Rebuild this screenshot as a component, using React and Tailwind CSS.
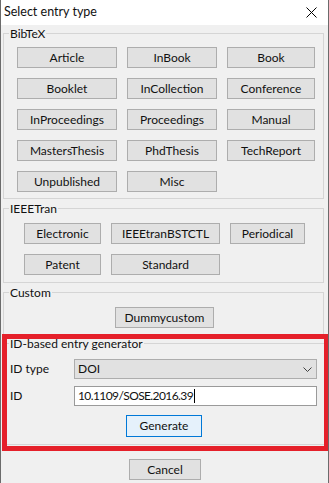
import { useState } from "react";

const bibtex = [
    ["Article", "InBook", "Book"],
    ["Booklet", "InCollection", "Conference"],
    ["InProceedings", "Proceedings", "Manual"],
    ["MastersThesis", "PhdThesis", "TechReport"],
    ["Unpublished", "Misc"],
];

const ieee = [
    ["Electronic", "IEEEtranBSTCTL", "Periodical"],
    ["Patent", "Standard"],
];

// widths of the columns in each group, the buttons fill them
const bibtexCols = ["w-[100px]", "w-[90px]", "w-[88px]"];
const ieeeCols = ["w-[77px]", "w-[109px]", "w-[75px]"];

function WinButton({ label, className = "" }) {
    return (
        <button className={`h-[21px] bg-[#e1e1e1] border border-[#adadad] text-[#111] leading-none ${className}`}>
            {label}
        </button>
    );
}

function Group({ title, className = "", children }) {
    return (
        <fieldset className={`border border-[#d5d5d5] ${className}`}>
            <legend className="ml-[5px] px-[1px] leading-[15px]">{title}</legend>
            {children}
        </fieldset>
    );
}

export default function App() {
    const [idType] = useState("DOI");
    const [id] = useState("10.1109/SOSE.2016.39");

    return (
        <div className="w-[329px] h-[483px] overflow-hidden bg-[#f0f0f0] border-x border-[#6b6b6b] flex flex-col text-[12px] text-[#111] font-['Lato','Noto_Sans',sans-serif]">
            <div className="h-[25px] bg-white flex items-center justify-between pl-[3px] pr-[11px] shrink-0">
                <span className="text-[12.5px]">Select entry type</span>
                <svg width="11" height="11" viewBox="0 0 11 11" className="text-black">
                    <path d="M0.5 0.5 L10.5 10.5 M10.5 0.5 L0.5 10.5" stroke="currentColor" strokeWidth="1" />
                </svg>
            </div>

            <div className="flex flex-col pl-[2px] pr-[4px] pt-[1px]">
                <Group title="BibTeX" className="pt-[6px] pb-[6px]">
                    <div className="flex flex-col gap-[10px] pl-[13px]">
                        {bibtex.map((row, i) => (
                            <div key={i} className="flex gap-[10px]">
                                {row.map((name, j) => (
                                    <WinButton key={name} label={name} className={bibtexCols[j]} />
                                ))}
                            </div>
                        ))}
                    </div>
                </Group>

                <Group title="IEEETran" className="mt-[2px] pt-[7px] pb-[7px]">
                    <div className="flex flex-col gap-[10px] pl-[20px]">
                        {ieee.map((row, i) => (
                            <div key={i} className="flex gap-[10px]">
                                {row.map((name, j) => (
                                    <WinButton key={name} label={name} className={ieeeCols[j]} />
                                ))}
                            </div>
                        ))}
                    </div>
                </Group>

                <Group title="Custom" className="mt-[2px] pt-[7px] pb-[6px]">
                    <div className="flex justify-center pl-[2px]">
                        <WinButton label="Dummycustom" className="w-[99px]" />
                    </div>
                </Group>
            </div>

            {/* red highlight around the generator */}
            <div className="ml-[1px] mr-[-1px] -mt-[1px] border-[5px] border-[#e5202a] pb-[1px]">
                <fieldset className="-mt-[3px] border-t border-b border-[#d5d5d5] pt-[8px] pb-[7px]">
                    <legend className="ml-[2px] px-[1px] leading-[15px]">ID-based entry generator</legend>
                    <div className="flex flex-col pl-[3px] pr-[7px]">
                        <div className="flex items-center h-[20px]">
                            <span className="w-[64px]">ID type</span>
                            <div className="flex-1 h-[20px] bg-[#e1e1e1] border border-[#adadad] flex items-center justify-between pl-[3px] pr-[4px]">
                                <span>{idType}</span>
                                <svg width="9" height="5" viewBox="0 0 9 5">
                                    <path d="M0.5 0.5 L4.5 4.5 L8.5 0.5" fill="none" stroke="#404040" strokeWidth="1" />
                                </svg>
                            </div>
                        </div>
                        <div className="flex items-center h-[20px] mt-[7px]">
                            <span className="w-[64px]">ID</span>
                            <div className="flex-1 h-[20px] bg-white border border-[#9a9a9a] flex items-center pl-[3px]">
                                <span className="tracking-[-0.6px]">{id}</span>
                                <span className="w-px h-[14px] bg-black ml-[1px]" />
                            </div>
                        </div>
                        <div className="flex justify-center mt-[9px] pl-[1px]">
                            <button className="w-[76px] h-[22px] bg-[#e5f1fb] border border-[#0078d7] leading-none">
                                Generate
                            </button>
                        </div>
                    </div>
                </fieldset>
            </div>

            <div className="flex justify-center mt-[8px] pl-[1px]">
                <WinButton label="Cancel" className="w-[72px]" />
            </div>
        </div>
    );
}
